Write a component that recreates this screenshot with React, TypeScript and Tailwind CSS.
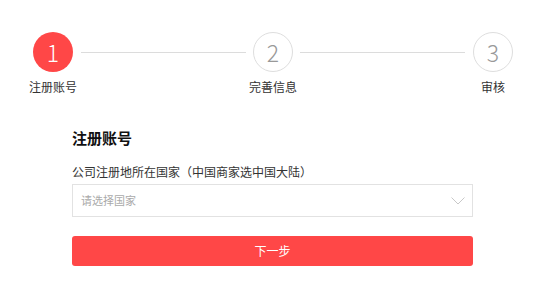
const steps = [
  { n: 1, label: "注册账号", active: true },
  { n: 2, label: "完善信息", active: false },
  { n: 3, label: "审核", active: false },
];

function Step({ n, label, active }: { n: number; label: string; active: boolean }) {
  return (
    <div className="flex w-10 flex-col items-center">
      <div
        className={
          active
            ? "flex h-10 w-10 items-center justify-center rounded-full bg-[#ff4747] text-[23px] font-light text-white"
            : "flex h-10 w-10 items-center justify-center rounded-full border border-[#dedede] bg-white text-[23px] font-light text-[#999]"
        }
      >
        {n}
      </div>
      <span className="mt-[7px] whitespace-nowrap text-[12px] leading-4 text-[#333]">{label}</span>
    </div>
  );
}

export default function App() {
  return (
    <div className="h-[308px] w-[554px] bg-white font-['Noto_Sans_CJK_SC','Noto_Sans',sans-serif]">
      {/* steps */}
      <div className="flex items-start pl-[33px] pr-[41px] pt-8">
        <Step {...steps[0]} />
        <div className="ml-2 mr-[7px] mt-5 h-px flex-1 bg-[#dcdcdc]" />
        <Step {...steps[1]} />
        <div className="ml-[7px] mr-2 mt-5 h-px flex-1 bg-[#dcdcdc]" />
        <Step {...steps[2]} />
      </div>

      {/* form */}
      <div className="ml-[72px] mt-[33px] w-[401px]">
        <h2 className="text-[15px] font-bold leading-5 text-[#111]">注册账号</h2>
        <p className="mt-4 text-[12px] leading-4 text-[#333]">公司注册地所在国家（中国商家选中国大陆）</p>
        <div className="mt-1 flex h-[33px] items-center justify-between border border-[#e2e2e2] pl-[8px] pr-[7px]">
          <span className="text-[11px] text-[#aaa]">请选择国家</span>
          <svg width="14" height="8" viewBox="0 0 14 8" fill="none" className="text-[#c8c8c8]">
            <path d="M0.5 0.5L7 7L13.5 0.5" stroke="currentColor" strokeWidth="1" />
          </svg>
        </div>
        <button className="mt-[19px] flex h-[30px] w-full items-center justify-center rounded-[3px] bg-[#ff4747] text-[12px] text-white">
          下一步
        </button>
      </div>
    </div>
  );
}
